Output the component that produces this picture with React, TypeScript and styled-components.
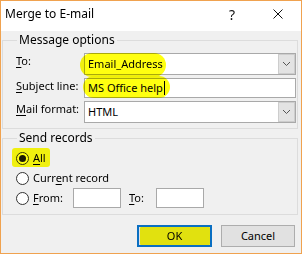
import React from 'react';
import styled, { createGlobalStyle } from 'styled-components';

const GlobalStyle = createGlobalStyle`
  html, body { margin: 0; padding: 0; background: #ffffff; }
  body {
    font-family: "Noto Sans", "Segoe UI", sans-serif;
    font-size: 11px;
    color: #000;
  }
  * { box-sizing: border-box; }
`;

const Window = styled.div`
  position: relative;
  width: 302px;
  height: 254px;
  border: 1px solid #f0a24f;
  background: #f0f0f0;
  display: flex;
  flex-direction: column;
  white-space: nowrap;
`;

const TitleBar = styled.div`
  height: 30px;
  flex: none;
  background: #ffffff;
  display: flex;
  align-items: center;
  padding-left: 4px;
`;

const Title = styled.div`
  flex: 1;
  font-size: 12px;
  line-height: 16px;
  margin-top: -4px;
`;

const CaptionButton = styled.div`
  width: 46px;
  height: 30px;
  display: flex;
  align-items: center;
  justify-content: center;
  font-size: 14px;
  color: #111;
  margin-top: -4px;
`;

const Group = styled.fieldset<{ $mt: number; $pb: number; $pt: number }>`
  margin: ${(p) => p.$mt}px 3px 0 1px;
  padding: ${(p) => p.$pt}px 1px ${(p) => p.$pb}px 13px;
  border: 1px solid #dcdcdc;
  min-width: 0;
  flex: none;
  display: flex;
  flex-direction: column;
`;

const Legend = styled.legend`
  padding: 0 2px;
  margin-left: 1px;
  font-size: 12px;
  line-height: 16px;
`;

const Rows = styled.div<{ $gap: number }>`
  display: flex;
  flex-direction: column;
  gap: ${(p) => p.$gap}px;
`;

const FieldRow = styled.div`
  display: flex;
  align-items: flex-start;
`;

const FieldLabel = styled.div`
  width: 68px;
  flex: none;
  line-height: 16px;
  margin-top: 0px;
`;

const Key = styled.span`
  text-decoration: underline;
  text-underline-offset: 2px;
  text-decoration-thickness: 1px;
`;

const Field = styled.div<{ $h: number }>`
  position: relative;
  flex: 1;
  height: ${(p) => p.$h}px;
  border: 1px solid #a9a9a9;
  background: #ffffff;
  display: flex;
  align-items: center;
  padding-left: 3px;
`;

const FieldText = styled.span`
  flex: 1;
  line-height: 16px;
`;

const Caret = styled.span`
  display: inline-block;
  width: 1px;
  height: 14px;
  background: #000;
  vertical-align: -3px;
  margin-left: 1px;
`;

const DropButton = styled.div`
  width: 17px;
  align-self: stretch;
  background: #e3e3e3;
  border: 1px solid #cdcdcd;
  display: flex;
  align-items: center;
  justify-content: center;
`;

const Highlight = styled.span<{ $l: number; $t: number; $w: number; $h: number; $r: number }>`
  position: absolute;
  left: ${(p) => p.$l}px;
  top: ${(p) => p.$t}px;
  width: ${(p) => p.$w}px;
  height: ${(p) => p.$h}px;
  border-radius: ${(p) => p.$r}px;
  background: #ffff10;
  mix-blend-mode: multiply;
  pointer-events: none;
`;

const RadioRow = styled.div`
  position: relative;
  height: 20px;
  display: flex;
  align-items: center;
`;

const Radio = styled.span<{ $checked?: boolean }>`
  width: 13px;
  height: 13px;
  flex: none;
  border-radius: 50%;
  border: 1px solid #333333;
  background: #ffffff;
  display: flex;
  align-items: center;
  justify-content: center;
  margin-right: 4px;
  &::after {
    content: '';
    width: 7px;
    height: 7px;
    border-radius: 50%;
    background: ${(p) => (p.$checked ? '#1a1a1a' : 'transparent')};
  }
`;

const RadioText = styled.span<{ $w?: number }>`
  line-height: 16px;
  ${(p) => (p.$w ? `width: ${p.$w}px;` : '')}
`;

const SmallBox = styled.div`
  width: 48px;
  height: 20px;
  flex: none;
  border: 1px solid #a9a9a9;
  background: #ffffff;
`;

const ToLabel = styled.span`
  width: 27px;
  margin-left: 8px;
  line-height: 16px;
`;

const ButtonBar = styled.div`
  display: flex;
  justify-content: flex-end;
  gap: 9px;
  padding-right: 6px;
  margin-top: 10px;
`;

const Button = styled.div<{ $default?: boolean }>`
  position: relative;
  width: ${(p) => (p.$default ? 75 : 74)}px;
  height: 22px;
  background: #e1e1e1;
  border: ${(p) => (p.$default ? '2px solid #0a6fc2' : '1px solid #adadad')};
  display: flex;
  align-items: center;
  justify-content: center;
  line-height: 16px;
`;

const Chevron = () => (
  <svg width="9" height="6" viewBox="0 0 9 6">
    <polyline points="1,1 4.5,4.5 8,1" fill="none" stroke="#555" strokeWidth="1" />
  </svg>
);

const CloseIcon = () => (
  <svg width="10" height="10" viewBox="0 0 10 10">
    <line x1="0.5" y1="0.5" x2="9.5" y2="9.5" stroke="#111" strokeWidth="1" />
    <line x1="9.5" y1="0.5" x2="0.5" y2="9.5" stroke="#111" strokeWidth="1" />
  </svg>
);

export default function App() {
  return (
    <>
      <GlobalStyle />
      <Window>
        <TitleBar>
          <Title>Merge to E-mail</Title>
          <CaptionButton>?</CaptionButton>
          <CaptionButton>
            <CloseIcon />
          </CaptionButton>
        </TitleBar>

        <Group $mt={1} $pt={5} $pb={5}>
          <Legend>Message options</Legend>
          <Rows $gap={3}>
            <FieldRow>
              <FieldLabel>
                <Key>T</Key>o:
              </FieldLabel>
              <Field $h={22}>
                <FieldText>Email_Address</FieldText>
                <DropButton>
                  <Chevron />
                </DropButton>
                <Highlight $l={-5} $t={-1} $w={86} $h={24} $r={12} />
              </Field>
            </FieldRow>
            <FieldRow>
              <FieldLabel>
                <Key>S</Key>ubject line:
              </FieldLabel>
              <Field $h={20}>
                <FieldText>
                  MS Office help
                  <Caret />
                </FieldText>
                <Highlight $l={-2} $t={-3} $w={87} $h={22} $r={11} />
              </Field>
            </FieldRow>
            <FieldRow>
              <FieldLabel>
                <Key>M</Key>ail format:
              </FieldLabel>
              <Field $h={22}>
                <FieldText>HTML</FieldText>
                <DropButton>
                  <Chevron />
                </DropButton>
              </Field>
            </FieldRow>
          </Rows>
        </Group>

        <Group $mt={1} $pt={2} $pb={6}>
          <Legend>Send records</Legend>
          <Rows $gap={0}>
            <RadioRow>
              <Radio $checked />
              <RadioText>
                <Key>A</Key>ll
              </RadioText>
              <Highlight $l={-4} $t={0} $w={38} $h={19} $r={3} />
            </RadioRow>
            <RadioRow>
              <Radio />
              <RadioText>
                Curr<Key>e</Key>nt record
              </RadioText>
            </RadioRow>
            <RadioRow>
              <Radio />
              <RadioText $w={40}>
                <Key>F</Key>rom:
              </RadioText>
              <SmallBox />
              <ToLabel>
                <Key>T</Key>o:
              </ToLabel>
              <SmallBox />
            </RadioRow>
          </Rows>
        </Group>

        <ButtonBar>
          <Button $default>
            OK
            <Highlight $l={1} $t={0} $w={70} $h={18} $r={1} />
          </Button>
          <Button>Cancel</Button>
        </ButtonBar>
      </Window>
    </>
  );
}
